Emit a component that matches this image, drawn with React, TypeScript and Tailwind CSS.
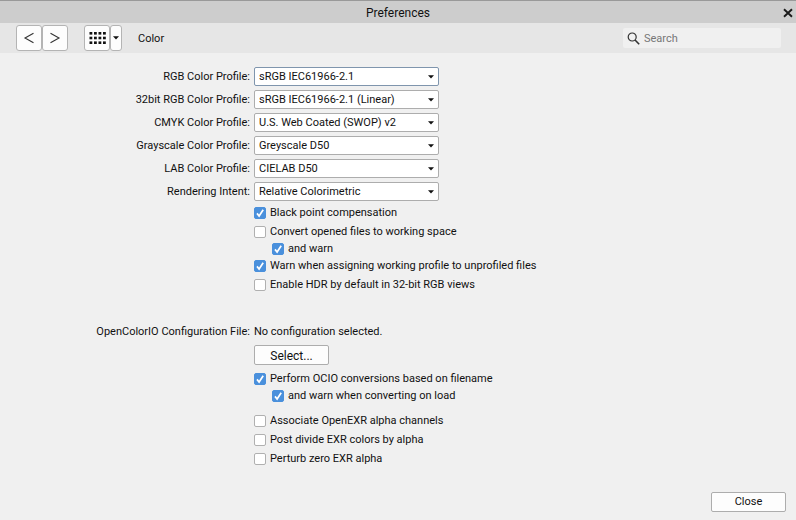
import { useState } from "react";
import type { ReactNode } from "react";

interface Profile {
  id: string;
  label: string;
  options: string[];
}

interface Option {
  id: string;
  label: string;
  checked: boolean;
  nested?: boolean;
}

const PROFILES: Profile[] = [
  { id: "rgb", label: "RGB Color Profile:", options: ["sRGB IEC61966-2.1"] },
  { id: "rgb32", label: "32bit RGB Color Profile:", options: ["sRGB IEC61966-2.1 (Linear)"] },
  { id: "cmyk", label: "CMYK Color Profile:", options: ["U.S. Web Coated (SWOP) v2"] },
  { id: "gray", label: "Grayscale Color Profile:", options: ["Greyscale D50"] },
  { id: "lab", label: "LAB Color Profile:", options: ["CIELAB D50"] },
  { id: "intent", label: "Rendering Intent:", options: ["Relative Colorimetric"] },
];

const COLOR_OPTIONS: Option[] = [
  { id: "bpc", label: "Black point compensation", checked: true },
  { id: "convert", label: "Convert opened files to working space", checked: false },
  { id: "convert-warn", label: "and warn", checked: true, nested: true },
  { id: "warn", label: "Warn when assigning working profile to unprofiled files", checked: true },
  { id: "hdr", label: "Enable HDR by default in 32-bit RGB views", checked: false },
];

const OCIO_OPTIONS: Option[] = [
  { id: "ocio", label: "Perform OCIO conversions based on filename", checked: true },
  { id: "ocio-warn", label: "and warn when converting on load", checked: true, nested: true },
];

const EXR_OPTIONS: Option[] = [
  { id: "exr-alpha", label: "Associate OpenEXR alpha channels", checked: false },
  { id: "exr-divide", label: "Post divide EXR colors by alpha", checked: false },
  { id: "exr-perturb", label: "Perturb zero EXR alpha", checked: false },
];

function DownArrow({ className = "" }: { className?: string }) {
  return (
    <svg viewBox="0 0 6 4" className={`w-1.5 h-1 ${className}`} aria-hidden="true">
      <path d="M0 0.3h6L3 3.6z" fill="#111" />
    </svg>
  );
}

function ToolButton({ label, className, children }: { label: string; className: string; children: ReactNode }) {
  return (
    <button
      aria-label={label}
      className={`h-[26px] flex items-center justify-center rounded-[3px] border border-[#b4b4b4] bg-[#fdfdfd] ${className}`}
    >
      {children}
    </button>
  );
}

function ProfileRow({ profile, active }: { profile: Profile; active: boolean }) {
  return (
    <>
      <label htmlFor={profile.id} className="text-right">
        {profile.label}
      </label>
      <div className="grid items-center w-[185px]">
        <select
          id={profile.id}
          className={`col-start-1 row-start-1 h-[19px] appearance-none rounded-[2px] border bg-white pt-px pl-1 pr-4 outline-none ${
            active ? "border-[#7f95ad]" : "border-[#adadad]"
          }`}
        >
          {profile.options.map((o) => (
            <option key={o}>{o}</option>
          ))}
        </select>
        <DownArrow className="col-start-1 row-start-1 justify-self-end mr-[5px] pointer-events-none" />
      </div>
    </>
  );
}

function CheckRow({ option }: { option: Option }) {
  const [checked, setChecked] = useState(option.checked);

  return (
    <label htmlFor={option.id} className={`flex items-center gap-1 ${option.nested ? "h-[15px] ml-[18px]" : "h-[19px]"}`}>
      <span className="grid items-center justify-items-center shrink-0">
        <input
          id={option.id}
          type="checkbox"
          checked={checked}
          onChange={(e) => setChecked(e.target.checked)}
          className="col-start-1 row-start-1 size-3 appearance-none rounded-[2px] border border-[#b0b0b0] bg-white checked:border-[#4a90dc] checked:bg-[#4a90dc]"
        />
        {checked && (
          <svg viewBox="0 0 12 12" className="col-start-1 row-start-1 size-3 pointer-events-none" aria-hidden="true">
            <path d="M3 6.4 5.1 9 9.2 2.8" fill="none" stroke="#fff" strokeWidth="1.7" />
          </svg>
        )}
      </span>
      <span className="pt-px">{option.label}</span>
    </label>
  );
}

export default function App() {
  return (
    <div className="min-h-screen flex flex-col bg-[#f0f0f0] font-[Roboto,'Noto_Sans',sans-serif] text-[11px] leading-4 text-[#111]">
      <header className="h-[23px] grid grid-cols-[1fr_auto_1fr] items-center border-t border-[#999] bg-[#cdcdcd] pt-px pl-[3px] pr-[3px]">
        <h1 className="col-start-2 text-[12px]">Preferences</h1>
        <button aria-label="Close window" className="justify-self-end">
          <svg viewBox="0 0 10 10" className="size-2.5" aria-hidden="true">
            <path d="M1 1.2 9 8.8M9 1.2 1 8.8" stroke="#1a1a1a" strokeWidth="1.9" />
          </svg>
        </button>
      </header>

      <nav className="h-[30px] flex items-center bg-[#e6e6e6] pl-4 pr-[15px]">
        <ToolButton label="Back" className="w-[26px]">
          <svg viewBox="0 0 12 12" className="size-3" aria-hidden="true">
            <path d="M10.5 1.2 2 6l8.5 4.8" fill="none" stroke="#333" strokeWidth="1.1" />
          </svg>
        </ToolButton>
        <ToolButton label="Forward" className="w-[26px]">
          <svg viewBox="0 0 12 12" className="size-3" aria-hidden="true">
            <path d="M1.5 1.2 10 6l-8.5 4.8" fill="none" stroke="#333" strokeWidth="1.1" />
          </svg>
        </ToolButton>
        <ToolButton label="All sections" className="ml-4 w-[26px]">
          <svg viewBox="0 0 17 12" className="w-[17px] h-3" fill="#111" aria-hidden="true">
            {[0, 4.7, 9.4].map((y) =>
              [0.5, 5, 9.5, 14].map((x) => <rect key={`${x}-${y}`} x={x} y={y} width="2.8" height="2.6" />)
            )}
          </svg>
        </ToolButton>
        <ToolButton label="Choose section" className="w-3">
          <DownArrow />
        </ToolButton>
        <span className="ml-4 pt-px">Color</span>
        <div className="ml-auto w-[158px] h-5 flex items-center gap-1 rounded-[2px] bg-[#f0f0f0] pl-1">
          <svg viewBox="0 0 13 13" className="size-[13px] shrink-0" fill="none" stroke="#333" aria-hidden="true">
            <circle cx="5.2" cy="5" r="4" strokeWidth="1.2" />
            <path d="m8 8 4.2 4.2" strokeWidth="1.6" />
          </svg>
          <input
            type="text"
            aria-label="Search"
            placeholder="Search"
            className="min-w-0 flex-1 bg-transparent pt-px outline-none placeholder:text-[#777]"
          />
        </div>
      </nav>

      <main className="grid grid-cols-[250px_1fr] items-center gap-x-1 pt-3.5">
        <div className="col-span-2 grid grid-cols-subgrid items-center gap-y-1">
          {PROFILES.map((p, i) => (
            <ProfileRow key={p.id} profile={p} active={i === 0} />
          ))}
        </div>

        <div className="col-start-2 mt-0.5 flex flex-col items-start">
          {COLOR_OPTIONS.map((o) => (
            <CheckRow key={o.id} option={o} />
          ))}
        </div>

        <span className="mt-[30px] text-right">OpenColorIO Configuration File:</span>
        <span className="mt-[30px]">No configuration selected.</span>

        <div className="col-start-2 mt-[5px] flex flex-col items-start">
          <button className="w-[75px] h-5 mb-1 flex items-center justify-center rounded-[2px] border border-[#adadad] bg-[#fdfdfd] pt-px text-[12px]">
            Select...
          </button>
          {OCIO_OPTIONS.map((o) => (
            <CheckRow key={o.id} option={o} />
          ))}
        </div>

        <div className="col-start-2 mt-2 flex flex-col items-start">
          {EXR_OPTIONS.map((o) => (
            <CheckRow key={o.id} option={o} />
          ))}
        </div>
      </main>

      <footer className="mt-auto flex justify-end pr-2.5 pb-2">
        <button className="w-[75px] h-5 flex items-center justify-center rounded-[2px] border border-[#adadad] bg-[#fdfdfd]">
          Close
        </button>
      </footer>
    </div>
  );
}
